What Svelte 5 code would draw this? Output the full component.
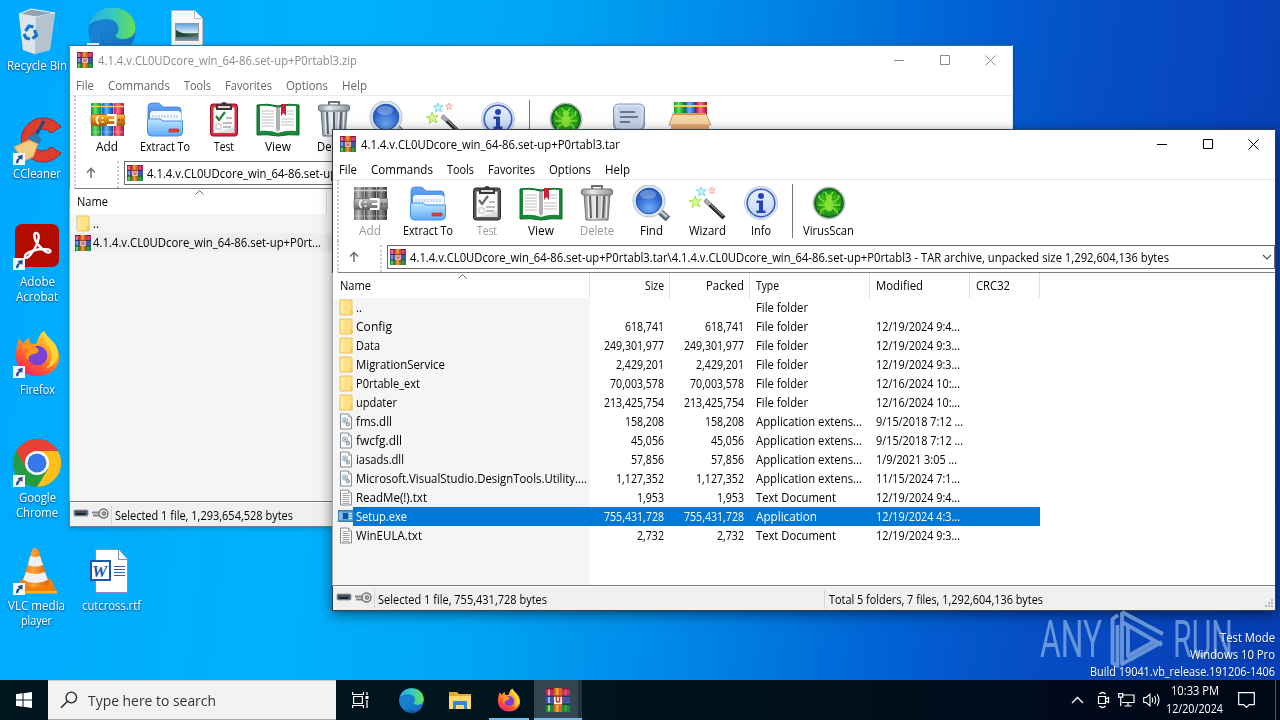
<script>
  // Scales a run of text horizontally so that it takes exactly `w` pixels.
  function fit(node, w) {
    if (!w) return;
    const natural = node.getBoundingClientRect().width;
    node.style.transform = `scaleX(${w / natural})`;
    node.style.marginRight = `${w - natural}px`;
  }

  const menu = [['File', 18], ['Commands', 62], ['Tools', 27], ['Favorites', 47], ['Options', 42], ['Help', 25]];

  const tools = [
    ['Add', 22, 58, 'add'], ['Extract To', 50, 58, 'extract'], ['Test', 20, 60, 'test'], ['View', 26, 48, 'view'],
    ['Delete', 34, 64, 'delete'], ['Find', 23, 44, 'find'], ['Wizard', 37, 68, 'wizard'], ['Info', 20, 40, 'info'],
    ['VirusScan', 51, 71, 'virus'], ['Comment', 50, 56, 'comment'], ['SFX', 22, 66, 'sfx']
  ];

  const rows = [
    ['folder', '..', 6, '', 'File folder', 52, '', 0],
    ['folder', 'Config', 36, '618,741', 'File folder', 52, '12/19/2024 9:4...', 84],
    ['folder', 'Data', 24, '249,301,977', 'File folder', 52, '12/19/2024 9:3...', 84],
    ['folder', 'MigrationService', 89, '2,429,201', 'File folder', 52, '12/19/2024 9:3...', 84],
    ['folder', 'P0rtable_ext', 64, '70,003,578', 'File folder', 52, '12/16/2024 10:...', 84],
    ['folder', 'updater', 41, '213,425,754', 'File folder', 52, '12/16/2024 10:...', 84],
    ['dll', 'fms.dll', 36, '158,208', 'Application extens...', 106, '9/15/2018 7:12 ...', 87],
    ['dll', 'fwcfg.dll', 46, '45,056', 'Application extens...', 106, '9/15/2018 7:12 ...', 87],
    ['dll', 'iasads.dll', 48, '57,856', 'Application extens...', 106, '1/9/2021 3:05 ...', 81],
    ['dll', 'Microsoft.VisualStudio.DesignTools.Utility....', 231, '1,127,352', 'Application extens...', 106, '11/15/2024 7:1...', 84],
    ['txt', 'ReadMe(!).txt', 71, '1,953', 'Text Document', 80, '12/19/2024 9:4...', 84],
    ['exe', 'Setup.exe', 51, '755,431,728', 'Application', 61, '12/19/2024 4:3...', 84],
    ['txt', 'WinEULA.txt', 66, '2,732', 'Text Document', 80, '12/19/2024 9:3...', 84]
  ];

  const numWidth = (s) => [...s].reduce((n, c) => n + (c === ',' ? 3 : 6), 0);
</script>

{#snippet t(text, w)}<span class="t" use:fit={w}>{text}</span>{/snippet}

{#snippet rar(size)}
  <svg width={size} height={size} viewBox="0 0 16 16">
    <rect x="0" y="0" width="16" height="5.4" fill="#c32d59" /><rect x="0" y="0" width="16" height="1" fill="#7a1c4a" />
    <rect x="0" y="5.3" width="16" height="5.3" fill="#4054b4" /><rect x="0" y="5" width="16" height="1" fill="#252f73" />
    <rect x="0" y="10.6" width="16" height="5.4" fill="#1c8b3c" /><rect x="0" y="10.4" width="16" height="1" fill="#103f39" />
    <rect x="1.4" y="1" width="1.2" height="4" fill="#f1a0a0" /><rect x="1.4" y="6" width="1.2" height="4" fill="#a9c1ec" /><rect x="1.4" y="11.5" width="1.2" height="4" fill="#abda7e" />
    <rect x="12.5" y="1" width="1.2" height="4" fill="#d9587a" /><rect x="12.5" y="11.5" width="1.2" height="4" fill="#4fa54a" />
    <rect x="5.4" y="0" width="5.2" height="16" fill="#d9691a" /><rect x="6.6" y="0" width="1.8" height="16" fill="#f2a23a" />
    <rect x="4.8" y="4.800" width="6.400" height="6.400" fill="#a8482a" />
    <path d="M5.900 6v4.200h4.200V6M8 6v2.600" fill="none" stroke="#fbf3ee" stroke-width="1.100" />
  </svg>
{/snippet}

{#snippet shortcut()}
  <svg class="shortcut" width="12" height="12" viewBox="0 0 12 12"><rect width="12" height="12" fill="#f5f7f9" /><path d="M3.2 10.6C2.6 7.6 4 5.7 6 5.1L4.4 3.2 9.7 1.8 9.3 7 7.7 5.8C6 6.8 5.5 8 5.6 9.6Z" fill="#254f91" /></svg>
{/snippet}

{#snippet fileIcon(kind)}
  <svg class="ficon" width="16" height="17" viewBox="0 0 16 17">
    {#if kind === 'folder'}
      <rect x="2" y="1" width="12" height="15" rx=".5" fill="#ffe083" stroke="#eac265" /><rect x="3" y="2" width="2.500" height="13" fill="#ffebaa" /><path d="M12 16v-5h2.500v5z" fill="#f4c75f" />
    {:else if kind === 'exe'}
      <rect x="0" y="2" width="15.5" height="12" fill="#397fad" /><rect x="1" y="3.5" width="13.5" height="9" fill="#69a8d9" /><rect x="5" y="5" width="5" height="6" fill="#0758a8" /><path d="M11 5.5h3M11 8h3M11 10.5h3" stroke="#d9edf9" /><rect x="1" y="4" width="3" height="8" fill="#8ebae0" />
    {:else}
      <path d="M2.5 1h8l3 3v12h-11z" fill="#fcfcfc" stroke="#85888c" /><path d="M10.5 1v3h3" fill="#e0e0e0" stroke="#85888c" stroke-width=".8" />
      {#if kind === 'dll'}
        <circle cx="7" cy="7.5" r="2.5" fill="#d2e2eb" stroke="#8a9cac" stroke-width="1.100" stroke-dasharray="1.4 .5" /><circle cx="7" cy="7.5" r=".8" fill="#6d8398" /><circle cx="10" cy="11.3" r="1.700" fill="#c4d4df" stroke="#8496a6" />
      {:else}
        <path d="M4.5 4.5h5M4.5 6.5h7M4.5 8.5h7M4.5 10.5h7M4.5 12.5h7M4.5 14.3h7" stroke="#999" stroke-width=".9" />
      {/if}
    {/if}
  </svg>
{/snippet}

{#snippet toolIcon(kind)}
  {#if kind === 'add'}
    <svg width="36" height="36" viewBox="0 0 36 36">
      <rect x="2" y="2" width="10.500" height="33" rx="1" fill="url(#bg)" /><rect x="13" y="2" width="11" height="33" rx="1" fill="url(#bb)" /><rect x="24.500" y="2" width="10.500" height="33" rx="1" fill="url(#br)" />
      <path d="M2 5.500h10.500M13 5.500h11M24.500 5.500H35" stroke="#f3cf55" stroke-width="1.600" />
      <path d="M2 31h10M13 31h11M25 31h10" stroke="#fff" stroke-opacity=".35" />
      <rect x="2" y="13.500" width="34" height="11" rx="2" fill="url(#gold)" stroke="#a55c08" stroke-width=".7" />
      <path d="M9.500 15q-4 4 0 8" fill="none" stroke="#fff1c9" stroke-width="2" /><path d="M13.500 16v6" stroke="#fbe2a5" stroke-width="2" stroke-dasharray="2 2" />
      <path d="M18 14h8.500v10H18M20 19h6" fill="none" stroke="#fff" stroke-width="2.200" /><circle cx="30" cy="19" r=".9" fill="#864300" /><circle cx="33.500" cy="19" r=".9" fill="#864300" />
    </svg>
  {:else if kind === 'extract'}
    <svg width="38" height="36" viewBox="0 0 38 36">
      <path d="M2 6q0-4 4-4h5q2 0 3 1l3 3h15q3 0 3 3v14H2z" fill="url(#fb)" stroke="#3e7ed8" stroke-width=".8" />
      <path d="M4 12l2-2h27l2 2v13H4z" fill="#f3f9ff" /><path d="M7 14v3M10 14v3M13 14v3M16 14v3M19 14v3M22 14v3M25 14v3M28 14v3M31 14v3" stroke="#a9bfd6" />
      <path d="M1.500 18H14l3 2h19.500v11q0 4-4 4h-27q-4 0-4-4z" fill="url(#ff)" stroke="#4191ea" />
      <rect x="23" y="28" width="10" height="3" rx=".5" fill="#e04035" stroke="#bc2a26" stroke-width=".6" />
    </svg>
  {:else if kind === 'test'}
    <svg width="30" height="36" viewBox="0 0 30 36">
      <rect x="1.500" y="3" width="27" height="32" rx="2.500" fill="#d82f3e" stroke="#8e1020" /><rect x="4.500" y="6.500" width="21" height="25.500" fill="#fafafa" />
      <path d="M7 9V5q0-2 2-2h3q1-2 3-2t3 2h3q2 0 2 2v4z" fill="#443237" /><path d="M9 6h12" stroke="#d8d8d8" stroke-width="2" />
      <path d="M7 15l3 4 6-8" fill="none" stroke="#23823b" stroke-width="2.200" /><path d="M17 17h6M14 22h9M14 26h8" stroke="#7c7c7c" stroke-width="1.200" /><path d="M7 23h5v5H7z" fill="#fff" stroke="#bbb" />
      <path d="M6 32h19v-6z" fill="#ddd" />
    </svg>
  {:else if kind === 'view'}
    <svg width="44" height="36" viewBox="0 0 44 36">
      <path d="M1 4q10-2 21 1 11-3 21-1v30q-10-1-21 1-11-2-21-1z" fill="#178a37" stroke="#08692a" /><path d="M4 5q10-1 18 2v25q-8-3-18-2zM40 5q-10-1-18 2v25q8-3 18-2z" fill="#fff" />
      <path d="M20 6q2 0 2 2v24q0-2-2-3zM24 6q-2 0-2 2v24q0-2 2-3z" fill="#aeb1b1" />
      <path d="M6 10h12M6 13h12M6 16h12M6 19h12M6 22h12M6 25h12M25 18h13M25 21h13M25 24h13M31 10h7M31 13h7" stroke="#bdc0bd" />
      <path d="M25 3h5v12l-2.500-3-2.500 3z" fill="#cf1d35" />
    </svg>
  {:else if kind === 'delete'}
    <svg width="34" height="36" viewBox="0 0 34 36">
      <path d="M12 4V1h10v3" fill="none" stroke="#6a7077" stroke-width="2" /><path d="M4 9h26l-2 26H6z" fill="url(#can)" stroke="#68737e" />
      <path d="M10 11l1 22M17 11v22M24 11l-1 22" stroke="#59636e" stroke-width="2" /><path d="M8 11l1 22M15 11v22M22 11l-1 22M27 11l-1 22" stroke="#eef2f6" stroke-width="1.300" />
      <rect x="1.500" y="4" width="31" height="6" rx="2" fill="url(#can)" stroke="#68737e" />
    </svg>
  {:else if kind === 'find'}
    <svg width="38" height="36" viewBox="0 0 38 36">
      <path d="M26 25l10 9" stroke="#596572" stroke-width="6.500" /><path d="M26 24l9 8" stroke="#b9c4ce" stroke-width="3" />
      <circle cx="17" cy="16" r="14.500" fill="url(#lens)" stroke="#dae4ef" stroke-width="3.500" /><circle cx="17" cy="16" r="16.200" fill="none" stroke="#a6b3c2" stroke-width=".7" /><circle cx="17" cy="16" r="12.800" fill="none" stroke="#2252a7" /><ellipse cx="16" cy="9.500" rx="8" ry="4.500" fill="#fff" opacity=".28" />
    </svg>
  {:else if kind === 'wizard'}
    <svg width="38" height="36" viewBox="0 0 38 36">
      <path d="M17 15L36 33" stroke="#26282a" stroke-width="4.200" /><path d="M17 14l18 17" stroke="#8a8e92" stroke-width="1.100" /><path d="M17 15l5 4.500" stroke="#a9abad" stroke-width="4" />
      <path d="M13 2l1.500 3 3.500-.5-2.500 3 1.500 3-3.500-1.500-3 2 .7-3.500-2.700-2.500 3.500-.2z" fill="#c5f4fb" stroke="#6fd6ea" stroke-width=".9" />
      <path d="M7 11l1.800 4 4.500-.5-3.300 3 2 4.200-4.200-2-3.600 3 .8-4.700-4-2.200 4.600-.5z" fill="#d5fa95" stroke="#9fdf4c" stroke-width=".9" />
      <path d="M24 2l1 2 2.500.2-2 1.800.7 2.500-2.200-1.200-2 1.500.5-2.700-2-1.800 2.600-.2z" fill="#ffe1e1" stroke="#f39c9c" stroke-width=".8" />
    </svg>
  {:else if kind === 'info'}
    <svg width="36" height="36" viewBox="0 0 36 36">
      <circle cx="18" cy="18" r="16.500" fill="#dfe6f6" stroke="#bdcae8" /><circle cx="18" cy="18" r="13.800" fill="url(#inf)" stroke="#395fb9" stroke-width="1.600" />
      <circle cx="18" cy="11" r="3" fill="#2445af" /><path d="M13.500 15.500H20V25.500h2.500V28h-9V25.500H16v-7.500h-2.500z" fill="#2445af" />
    </svg>
  {:else if kind === 'virus'}
    <svg width="36" height="36" viewBox="0 0 36 36">
      <circle cx="18" cy="18" r="16" fill="#dce4e5" stroke="#a9b2b3" /><circle cx="18" cy="18" r="14" fill="url(#vir)" stroke="#17681b" stroke-width="1.800" />
      <path d="M6 12h24M6 18h24M6 24h24M12 6v24M24 6v24" stroke="#5cd52d" stroke-width=".7" opacity=".8" />
      <ellipse cx="18" cy="20" rx="4.500" ry="6.500" fill="#86e032" /><circle cx="18" cy="12.500" r="3" fill="#86e032" />
      <path d="M14 17L9 14 8 10M14 20H7M14 23l-4 3-.5 3M22 17l5-3 1-4M22 20h7M22 23l4 3 .5 3M16 10l-2-3M20 10l2-3" fill="none" stroke="#86e032" stroke-width="1.400" />
    </svg>
  {:else if kind === 'comment'}
    <svg width="34" height="36" viewBox="0 0 34 36"><rect x="1.500" y="3" width="31" height="26" rx="5" fill="url(#cm)" stroke="#7d90ab" /><rect x="4" y="5" width="26" height="22" rx="3" fill="#c3d3e8" stroke="#dde8f4" /><path d="M8 11h15M8 16h18M8 21h10" stroke="#505b6b" stroke-width="1.600" /></svg>
  {:else}
    <svg width="44" height="36" viewBox="0 0 44 36"><rect x="6" y="1" width="11" height="16" fill="url(#bg)" /><rect x="17" y="1" width="11" height="16" fill="url(#bb)" /><rect x="28" y="1" width="11" height="16" fill="url(#br)" /><path d="M6 5h33" stroke="#f4cc49" stroke-width="2" /><path d="M5 13L1 24h42l-5-11z" fill="#f7d6a4" stroke="#d39a62" /><path d="M5 12h33v2H5z" fill="#d99758" /><path d="M3 24h38v11H3z" fill="#e8a872" /></svg>
  {/if}
{/snippet}

{#snippet edge(s)}
  <svg width={s} height={s} viewBox="0 0 48 48">
    <circle cx="24" cy="24" r="23.500" fill="url(#edgeb)" />
    <path d="M1 19C4 7 13 .5 24 .5 38 .5 47.500 10 47.500 21c0 7-5 11-12 11-6 0-8-2-8-4 2-2 3-3 3-6 0-6-5-10-12-10C10 12 3 16 1 19z" fill="url(#edgeg)" />
    <path d="M18 17c-6 5-6 16 1 22 6 5 16 6 25-2C38 48 25 50 16 46 4 41 0 31 1 19c5-6 12-7 17-2z" fill="#1459a8" opacity=".75" />
    <path d="M1 20c7-9 21-9 26-2-5-2-11 0-13 6-2 7 1 15 7 20C8 44-1 33 1 20z" fill="#1b80d0" />
  </svg>
{/snippet}

{#snippet firefox(s)}
  <svg width={s} height={s} viewBox="0 0 46 48">
    <path d="M4 9c2 1 3 3 4 5 2-3 4-5 7-6-1 3 0 5 2 6h5c2-7 4-11 8-13 1 7 9 10 13 18C50 34 39 47 23 47 9 47 0 37 1 24c0-6 2-11 3-15z" fill="url(#fox)" />
    <circle cx="23" cy="26" r="10" fill="#7842d5" /><path d="M6 17c6-3 12-2 16 1 3 2 3 5-1 6-5 1-8 3-7 7-6-4-3-9 1-11-3-1-6-1-9-3z" fill="#ff971e" />
    <path d="M30 1c-1 6 0 10 4 15 5 6 4 17-2 23 12-3 14-14 10-23-3-6-10-9-12-15z" fill="#ffda35" opacity=".85" />
  </svg>
{/snippet}

{#snippet win(cls, title, tw, addr, aw, status, sw, count, off)}
  <section class="window {cls}">
    <header class="title">
      {@render rar(16)}<span class="caption">{@render t(title, tw)}</span>
      <svg class="controls" width="140" height="30" viewBox="0 0 140 30"><path d="M20 14.500h10M66.500 9.500h9v9h-9zM111.500 9.500l10 10M121.500 9.500l-10 10" fill="none" stroke="currentColor" /></svg>
    </header>
    <nav class="menu">{#each menu as [m, w]}<span>{@render t(m, w)}</span>{/each}</nav>
    <div class="toolbar">
      {#each tools.slice(0, count) as [label, w, bw, icon], i}
        {#if i === 8}<i class="sep"></i>{/if}
        <div class="tool" class:off={off.includes(label)} style:width="{bw}px">{@render toolIcon(icon)}<span>{@render t(label, w)}</span></div>
      {/each}
    </div>
    <div class="addrrow">
      <svg width="14" height="14" viewBox="0 0 14 14"><path d="M7 12V3M3 6.500L7 2.500l4 4" fill="none" stroke="#777" stroke-width="1.600" /></svg>
      <i class="grip"></i>
      <div class="addr">{@render rar(16)}<span>{@render t(addr, aw)}</span><svg class="chev" width="10" height="7" viewBox="0 0 10 7"><path d="M1 1l4 4 4-4" fill="none" stroke="#555" stroke-width="1.200" /></svg></div>
    </div>
    <div class="list">
      <svg class="sort" width="9" height="5" viewBox="0 0 9 5"><path d="M.5 4.500l4-4 4 4" fill="none" stroke="#666" /></svg>
      <div class="cols head">
        <span class="name">{@render t('Name', 31)}</span>
        {#if cls === 'front'}
          <span class="num">{@render t('Size', 19)}</span><span class="num">{@render t('Packed', 38)}</span><span class="cell">{@render t('Type', 23)}</span><span class="cell">{@render t('Modified', 47)}</span><span class="cell">{@render t('CRC32', 34)}</span>
        {/if}
      </div>
      <div class="body">
        {#if cls === 'front'}
          {#each rows as [icon, name, nw, size, type, yw, date, dw]}
            <div class="cols row" class:selected={icon === 'exe'}>
              <span class="name">{@render fileIcon(icon)}{@render t(name, nw)}</span>
              <span class="num">{@render t(size, numWidth(size))}</span><span class="num">{@render t(size, numWidth(size))}</span>
              <span class="cell">{@render t(type, yw)}</span><span class="cell">{@render t(date, dw)}</span><span class="cell"></span>
            </div>
          {/each}
        {:else}
          <div class="cols row"><span class="name">{@render fileIcon('folder')}{@render t('..', 6)}</span></div>
          <div class="cols row hot"><span class="name"><b class="ficon rarfile">{@render rar(16)}</b>{@render t('4.1.4.v.CL0UDcore_win_64-86.set-up+P0rt...', 228)}</span></div>
        {/if}
      </div>
    </div>
    <footer class="status">
      <svg width="38" height="13" viewBox="0 0 38 13"><rect x="1" y="3" width="14" height="6" rx="1" fill="#42505f" stroke="#9ca4ac" /><path d="M3 7h9" stroke="#17222d" stroke-width="2" /><path d="M19 5.500h9M20 8.500h4M24 8.500h4" stroke="#858585" stroke-width="2" /><circle cx="30.500" cy="6.500" r="4.500" fill="#e9e9e9" stroke="#777" stroke-width="1.500" /><circle cx="31" cy="6.500" r="1.700" fill="#bbb" stroke="#555" /></svg>
      <span class="left">{@render t(status, sw)}</span>
      {#if cls === 'front'}<span class="right">{@render t('Total 5 folders, 7 files, 1,292,604,136 bytes', 214)}</span>{/if}
      <svg class="grab" width="9" height="9" viewBox="0 0 9 9"><path d="M6 0h2v2H6zM3 3h2v2H3zM6 3h2v2H6zM0 6h2v2H0zM3 6h2v2H3zM6 6h2v2H6z" fill="#bbb" /></svg>
    </footer>
  </section>
{/snippet}

<svg class="defs" width="0" height="0">
  <defs>
    <linearGradient id="bg"><stop offset="0" stop-color="#178a2d" /><stop offset=".4" stop-color="#5de36a" /><stop offset="1" stop-color="#0c7524" /></linearGradient>
    <linearGradient id="bb"><stop offset="0" stop-color="#164db5" /><stop offset=".4" stop-color="#62b5ff" /><stop offset="1" stop-color="#123f9a" /></linearGradient>
    <linearGradient id="br"><stop offset="0" stop-color="#b9173c" /><stop offset=".4" stop-color="#ff7188" /><stop offset="1" stop-color="#a50c34" /></linearGradient>
    <linearGradient id="gold" x2="0" y2="1"><stop offset="0" stop-color="#ffc34d" /><stop offset=".5" stop-color="#dc8716" /><stop offset="1" stop-color="#a75707" /></linearGradient>
    <linearGradient id="fb" x2="0" y2="1"><stop offset="0" stop-color="#6aa7f5" /><stop offset="1" stop-color="#347dde" /></linearGradient>
    <linearGradient id="ff" x2="0" y2="1"><stop offset="0" stop-color="#c2e8ff" /><stop offset="1" stop-color="#5aaaf8" /></linearGradient>
    <linearGradient id="can"><stop offset="0" stop-color="#8995a1" /><stop offset=".35" stop-color="#e6ebf0" /><stop offset="1" stop-color="#87929e" /></linearGradient>
    <radialGradient id="lens" cy=".75"><stop offset="0" stop-color="#6cadf8" /><stop offset="1" stop-color="#2961c9" /></radialGradient>
    <linearGradient id="inf" x2="0" y2="1"><stop offset="0" stop-color="#e7f0ff" /><stop offset="1" stop-color="#c3d6fa" /></linearGradient>
    <radialGradient id="vir"><stop offset="0" stop-color="#42b922" /><stop offset="1" stop-color="#169017" /></radialGradient>
    <linearGradient id="cm" x2="0" y2="1"><stop offset="0" stop-color="#dce6f3" /><stop offset="1" stop-color="#91a6c2" /></linearGradient>
    <linearGradient id="edgeb" x2="1" y2="1"><stop offset="0" stop-color="#1d93d8" /><stop offset="1" stop-color="#1367c0" /></linearGradient>
    <linearGradient id="edgeg"><stop offset="0" stop-color="#27aee5" /><stop offset=".5" stop-color="#35c8c5" /><stop offset="1" stop-color="#68df4e" /></linearGradient>
    <linearGradient id="fox" x1=".8" x2=".2" y2="1"><stop offset="0" stop-color="#ffe13e" /><stop offset=".4" stop-color="#ff9a23" /><stop offset=".75" stop-color="#ff4a3c" /><stop offset="1" stop-color="#ec1d70" /></linearGradient>
    <linearGradient id="cone"><stop offset="0" stop-color="#f57a05" /><stop offset=".4" stop-color="#ffa136" /><stop offset="1" stop-color="#dc6300" /></linearGradient>
    <linearGradient id="sky" x2="0" y2="1"><stop offset="0" stop-color="#5d9fe0" /><stop offset=".55" stop-color="#dcebf2" /><stop offset=".6" stop-color="#365c4c" /><stop offset="1" stop-color="#7c9ab2" /></linearGradient>
  </defs>
</svg>

<main class="desktop">
  <div class="item bin">
    <svg width="40" height="48" viewBox="0 0 40 48"><path d="M2 6L14 1l24 4-5 37-15 4L6 42z" fill="#cfdde6" opacity=".9" /><path d="M2 6l17 3 19-4L14 1z" fill="#8fa3b0" stroke="#edf5fa" /><path d="M2 6l17 3-1 37-12-4z" fill="#dde5ea" /><path d="M19 9l19-4-5 37-15 4z" fill="#b4c3ce" /><path d="M8.500 23l3.500-5 4.500 1M17.500 22l2 5.500-4 3M13 31l-4-1-2-4" fill="none" stroke="#1474cb" stroke-width="3.200" /></svg>
    <p>{@render t('Recycle Bin', 60)}</p>
  </div>
  <div class="item ccleaner">
    <svg width="50" height="48" viewBox="0 0 50 48"><path d="M48 10A22 22 0 1 0 48 36L38 30a11 11 0 1 1 0-14z" fill="#dc3d2e" stroke="#a92722" /><path d="M31 4l-10 18" stroke="#1a4f80" stroke-width="3" /><path d="M14 21l9-5 6 6-4 6z" fill="#2c7bb2" /><path d="M1 30l15-7 9 4-5 13-9 4z" fill="#f3cc83" stroke="#d2a253" /></svg>{@render shortcut()}
    <p>{@render t('CCleaner', 48)}</p>
  </div>
  <div class="item acrobat">
    <svg width="46" height="44" viewBox="0 0 46 44"><rect x="1" y="0" width="44" height="43" rx="7" fill="#b30b00" /><path d="M22 9c5 0 2 10-1 15-4 7-9 12-10 9-1-4 9-7 15-8 6 0 12 0 10 3-3 3-13-7-15-13-1-3-1-6 1-6z" fill="none" stroke="#fff" stroke-width="2.400" /></svg>{@render shortcut()}
    <p>{@render t('Adobe', 35)}<br />{@render t('Acrobat', 42)}</p>
  </div>
  <div class="item ff">{@render firefox(47)}{@render shortcut()}<p>{@render t('Firefox', 35)}</p></div>
  <div class="item chrome">
    <svg width="48" height="48" viewBox="0 0 48 48"><circle cx="24" cy="24" r="24" fill="#249c46" /><path d="M24 12h21A24 24 0 0 1 24 48L35 30z" fill="#fcc01b" /><path d="M3.500 12A24 24 0 0 1 45 12H24L13.600 30z" fill="#e94034" /><circle cx="24" cy="24" r="12" fill="#fff" /><circle cx="24" cy="24" r="9.500" fill="#3779ec" /></svg>{@render shortcut()}
    <p>{@render t('Google', 37)}<br />{@render t('Chrome', 42)}</p>
  </div>
  <div class="item vlc">
    <svg width="44" height="48" viewBox="0 0 44 48"><path d="M7 32h30l6 14H2z" fill="#f77e05" /><path d="M2 44h41v2.500H2z" fill="#ffb02f" /><path d="M21 1q3 0 3.500 2L35 37q-13 7-27 0L18 3q.5-2 3-2z" fill="url(#cone)" /><path d="M16 9q5 2 10 0l3 9q-8 3-15 0zM12 25q9 4 19 0l3 8q-13 6-25 0z" fill="#f1f1f1" /></svg>{@render shortcut()}
    <p>{@render t('VLC media', 57)}<br />{@render t('player', 31)}</p>
  </div>
  <div class="item word">
    <svg width="38" height="45" viewBox="0 0 38 45"><path d="M5.500 .5H29l8.500 10v33h-32z" fill="#fff" stroke="#7e93a6" /><path d="M28.500 .5v10h9" fill="#eef3f8" stroke="#7e93a6" /><rect x="1" y="12" width="19" height="19" fill="#fff" stroke="#1d55ad" stroke-width="2" /><path d="M24 17.500h11M24 20.500h11M24 23.500h11M24 26.500h11" stroke="#2c62b7" /><text x="2" y="28" class="w">W</text></svg>
    <p>{@render t('cutcross.rtf', 59)}</p>
  </div>
  <div class="item edgeicon">{@render edge(48)}{@render shortcut()}</div>
  <div class="item picture"><svg width="32" height="40" viewBox="0 0 32 40"><path d="M.5.500h23l8 8V40H.500z" fill="#f7f7f7" stroke="#b9bcbf" /><path d="M23.500.500v8h8" fill="#fff" stroke="#b9bcbf" /><rect x="4.500" y="13.500" width="23" height="17" fill="url(#sky)" stroke="#999" /><path d="M5 20q8 5 20 6l-20 1z" fill="#234936" /></svg></div>

  {@render win('back', '4.1.4.v.CL0UDcore_win_64-86.set-up+P0rtabl3.zip', 259, '4.1.4.v.CL0UDcore_win_64-86.set-up+P0rtabl3.zip', 259, 'Selected 1 file, 1,293,654,528 bytes', 178, 11, [])}
  {@render win('front', '4.1.4.v.CL0UDcore_win_64-86.set-up+P0rtabl3.tar', 259, '4.1.4.v.CL0UDcore_win_64-86.set-up+P0rtabl3.tar\\4.1.4.v.CL0UDcore_win_64-86.set-up+P0rtabl3 - TAR archive, unpacked size 1,292,604,136 bytes', 759, 'Selected 1 file, 755,431,728 bytes', 169, 9, ['Add', 'Test', 'Delete'])}

  <div class="brand">
    <span>{@render t('ANY', 62)}</span>
    <svg width="56" height="60" viewBox="0 0 56 60"><path d="M8 6L2.500 10V54l5 3V16M12 3V55L52 33M12 3L53 25M12 13L52 36M18 17v30l27-15" fill="none" stroke="currentColor" stroke-width="3.800" stroke-linejoin="round" /></svg>
    <span>{@render t('RUN', 60)}</span>
  </div>
  <div class="build"><span>{@render t('Test Mode', 55)}</span><span>{@render t('Windows 10 Pro', 85)}</span><span>{@render t('Build 19041.vb_release.191206-1406', 185)}</span></div>

  <footer class="taskbar">
    <div class="start"><svg width="16" height="16" viewBox="0 0 16 16"><path d="M0 2.200l6.500-.9v6.200H0zM7.500 1.200L16 0v7.500H7.500zM0 8.500h6.500v6.200L0 13.800zM7.500 8.500H16V16l-8.500-1.200z" fill="#fff" /></svg></div>
    <div class="search"><svg width="18" height="18" viewBox="0 0 18 18"><circle cx="11.300" cy="6.500" r="5.300" fill="none" stroke="#222" stroke-width="1.300" /><path d="M7.500 10.300L1 16.800" stroke="#222" stroke-width="1.400" /></svg><span>{@render t('Type here to search', 128)}</span></div>
    <div class="app"><svg width="17" height="18" viewBox="0 0 17 18"><path d="M.6 1v2.500h10.800V1M.6 17v-2.500h10.800V17M1.600 5.500h8.800v7H1.600zM15 1v3M15 9v8" fill="none" stroke="#fff" stroke-width="1.200" /><path d="M13.500 5h3v3h-3z" fill="#fff" /></svg></div>
    <div class="app e">{@render edge(25)}</div>
    <div class="app"><svg width="22" height="19" viewBox="0 0 22 19"><path d="M0 1h8l2 2h12v15H0z" fill="#e8a72f" /><path d="M0 5h22v13H0z" fill="#ffd76b" /><path d="M4 18v-7q0-1 1-1h12q1 0 1 1v7h-3v-4H7v4z" fill="#2f8bd0" /></svg></div>
    <div class="app run">{@render firefox(24)}</div>
    <div class="app active">{@render rar(24)}</div>
    <div class="tray">
      <svg width="13" height="8" viewBox="0 0 13 8"><path d="M1 7l5.500-5.500L12 7" fill="none" stroke="#fff" stroke-width="1.300" /></svg>
      <svg width="13" height="18" viewBox="0 0 13 18"><path d="M1.500 5.500h7v7h-7zM8.500 8l3-1.500v5L8.500 10M2.500 3q3-3 6 0M2.500 15q3 3 6 0" fill="none" stroke="#fff" stroke-width="1.200" /></svg>
      <svg width="17" height="14" viewBox="0 0 17 14"><path d="M4 2h12v7.500H4M10 9.500V13M6.500 13h7M.7.700h4v3.500h-4zM2.700 4.200V13" fill="none" stroke="#fff" stroke-width="1.200" /></svg>
      <svg width="17" height="14" viewBox="0 0 17 14"><path d="M.7 4.500h2.500L7 1.200v11.600L3.200 9.500H.7zM9 4.500q1.500 2.500 0 5M11.500 3q2.500 4 0 8M14 1.200q4 5.800 0 11.600" fill="none" stroke="#fff" stroke-width="1.100" /></svg>
    </div>
    <div class="clock"><span>{@render t('10:33 PM', 48)}</span><span>{@render t('12/20/2024', 57)}</span></div>
    <svg class="note" width="17" height="17" viewBox="0 0 17 17"><path d="M.7.700h15.600v12h-5L8.500 15.500 5.700 12.700h-5z" fill="none" stroke="#fff" stroke-width="1.200" /></svg>
    <i class="peek"></i>
  </footer>
</main>

<style>
  :global(body) { margin: 0; overflow: hidden; }
  svg { display: block; flex: none; }
  .defs { position: absolute; }
  .t { display: inline-block; white-space: pre; transform-origin: left center; }
  .desktop { position: relative; width: 1280px; height: 720px; overflow: hidden; font: 12px/15px "Open Sans", "Noto Sans", sans-serif; color: #000;
    background: linear-gradient(97deg, #00aaff 0, #00b1fc 26%, #00a5f5 40%, #0088e8 55%, #0064d4 70%, #064fc6 80%, #0743ba 92%, #053db2 100%); }

  .item { position: absolute; display: flex; flex-direction: column; align-items: center; width: 76px; color: #fff; }
  .item p { margin: 0; width: 100%; text-align: center; text-shadow: 0 1px 2px #003b6a; position: absolute; top: 50px; }
  .item .shortcut { position: absolute; left: 13px; top: 36px; }
  .bin { left: -1px; top: 8px; } .bin p { left: 0; }
  .ccleaner { left: 0; top: 117px; } .ccleaner p { left: -1px; top: 49px; }
  .acrobat { left: -1px; top: 224px; } .acrobat p { top: 50px; } .acrobat .shortcut { left: 14px; top: 34px; }
  .ff { left: -1px; top: 330px; } .ff p { top: 52px; } .ff .shortcut { left: 14px; }
  .chrome { left: -1px; top: 439px; } .chrome p { top: 51px; } .chrome .shortcut { left: 14px; }
  .vlc { left: -2px; top: 547px; } .vlc p { top: 51px; } .vlc .shortcut { left: 15px; }
  .word { left: 73px; top: 549px; } .word svg { margin-right: 4px; } .word p { top: 49px; }
  .w { font: italic bold 17px "Liberation Serif", serif; fill: #1d55ad; }
  .edgeicon { left: 74px; top: 7px; }
  .picture { left: 149px; top: 10px; }

  .window { position: absolute; box-sizing: border-box; display: flex; flex-direction: column; width: 944px; height: 482px; background: #fff; border: 1px solid #4e6678; box-shadow: 0 2px 9px #0007; }
  .back { left: 69px; top: 45px; border-color: #70838f; border-top-color: #2d75a5; border-right-color: #e8eef5; box-shadow: 0 1px 5px #0004; }
  .front { left: 332px; top: 129px; border-color: #31404c; box-shadow: 0 3px 12px #0008; }
  .title { height: 30px; display: flex; align-items: center; padding-left: 7px; gap: 5px; }
  .title > svg:first-child { margin-top: -2px; }
  .back .menu { color: #666; }
  .back .title { color: #8b8b8b; }
  .controls { margin: 0 -2px 0 auto; }
  .caption { flex: 1; margin-top: -1px; }
  .menu { height: 19px; display: flex; align-items: center; gap: 14px; padding-left: 6px; border-bottom: 1px solid #e9e9e9; }
  .toolbar { height: 61px; display: flex; padding-left: 2px; margin-left: 4px; border-left: 2px dotted #c9c9c9; }
  .tool { display: flex; flex-direction: column; align-items: center; padding-top: 5px; flex: none; }
  .tool span { white-space: nowrap; line-height: 19px; }
  .off { color: #999; } .off svg { filter: grayscale(1); }
  .sep { width: 1px; height: 54px; margin: 4px 0 0 11px; background: #777; }
  .addrrow { height: 31px; display: flex; align-items: center; margin-left: 4px; border-left: 2px dotted #c9c9c9; padding-left: 8px; border-bottom: 1px solid #808080; }
  .grip { height: 27px; border-left: 2px dotted #c9c9c9; margin: 3px 5px 0 19px; }
  .addr { box-sizing: border-box; height: 24px; flex: 1; margin-top: 1px; border: 1px solid #686868; display: flex; align-items: center; padding: 0 2px 0 2px; gap: 5px; min-width: 0; }
  .addr > span { flex: 1; padding-top: 1px; margin-left: -1px; }
  .list { position: relative; flex: 1; min-height: 0; display: flex; flex-direction: column; border-bottom: 1px solid #777; border-left: 1px solid #aaa; margin-left: -1px; }
  .sort { position: absolute; left: 125px; top: 1px; }
  .cols { display: grid; grid-template-columns: 257px 80px 80px 120px 100px 70px; align-items: center; }
  .head { height: 25px; }
  .head > span { box-sizing: border-box; height: 25px; padding-top: 5px; border-right: 1px solid #e1e1e1; }
  .head > .name { padding-left: 7px; }
  .num { text-align: right; padding-right: 6px; white-space: nowrap; }
  .head > .num { padding-right: 5px; }
  .cell { padding-left: 6px; white-space: nowrap; }
  .body { flex: 1; background: linear-gradient(90deg, #f5f5f5 257px, #fff 257px); }
  .row { height: 19px; width: 707px; }
  .row .name { display: flex; align-items: center; height: 19px; padding-left: 5px; }
  .ficon { margin-right: 2px; }
  .hot { background: linear-gradient(90deg, #efefef 290px, #fff 290px); }
  .selected { color: #fff; background: linear-gradient(90deg, #f5f5f5 20px, #0078d7 20px); }
  .status { box-sizing: border-box; height: 24px; background: #f0f0f0; display: flex; align-items: center; border-top: 1px solid #fff; padding-left: 3px; }
  .status > svg { margin-top: -2px; }
  .status .left { width: 446px; border-left: 1px solid #d5d5d5; padding: 2px 0 2px 3px; margin-top: 2px; }
  .status .right { border-left: 1px solid #d5d5d5; padding: 2px 0 2px 4px; margin-top: 2px; }
  .status .grab { margin: 9px 1px 0 auto; }

  .brand { position: absolute; left: 1040px; top: 610px; height: 60px; display: flex; align-items: center; color: #a5c5eb9c; font: 400 52px/60px Roboto, sans-serif; }
  .brand svg { margin: -2px 7px 0 8px; }
  .build { position: absolute; right: 5px; top: 630px; display: flex; flex-direction: column; align-items: flex-end; gap: 2px; color: #fff; text-shadow: 0 1px 1px #0228; }

  .taskbar { position: absolute; inset: 680px 0 0 0; display: flex; align-items: stretch; background: linear-gradient(90deg, #00161f, #00131d 55%, #000b1b 80%, #000715); color: #fff; }
  .start { width: 48px; display: flex; align-items: center; justify-content: center; }
  .search { box-sizing: border-box; width: 288px; background: #f2f2f2; border-bottom: 1px solid #aaa; border-top: 1px solid #ccc; color: #333; display: flex; align-items: center; gap: 10px; padding-left: 12px; font-size: 15px; line-height: 20px; }
  .app { box-sizing: border-box; width: 49px; display: flex; align-items: center; justify-content: center; }
  .e { width: 50px; padding-left: 2px; }
  .run { border-bottom: 2px solid #76b9ed; width: 40px; margin: 0 5px; padding-top: 1px; }
  .active { width: 48px; background: linear-gradient(90deg, #34464f 44px, #20333d 44px); border-bottom: 2px solid #76b9ed; padding-top: 1px; }
  .tray { margin-left: auto; display: flex; align-items: center; gap: 8px; }
  .tray svg:first-child { margin-right: 5px; }
  .clock { display: flex; flex-direction: column; align-items: center; gap: 3px; padding: 3px 0 0 6px; }
  .note { margin: 12px 0 0 15px; }
  .peek { width: 1px; margin-left: 20px; margin-right: 4px; background: #4e5863; }
</style>
